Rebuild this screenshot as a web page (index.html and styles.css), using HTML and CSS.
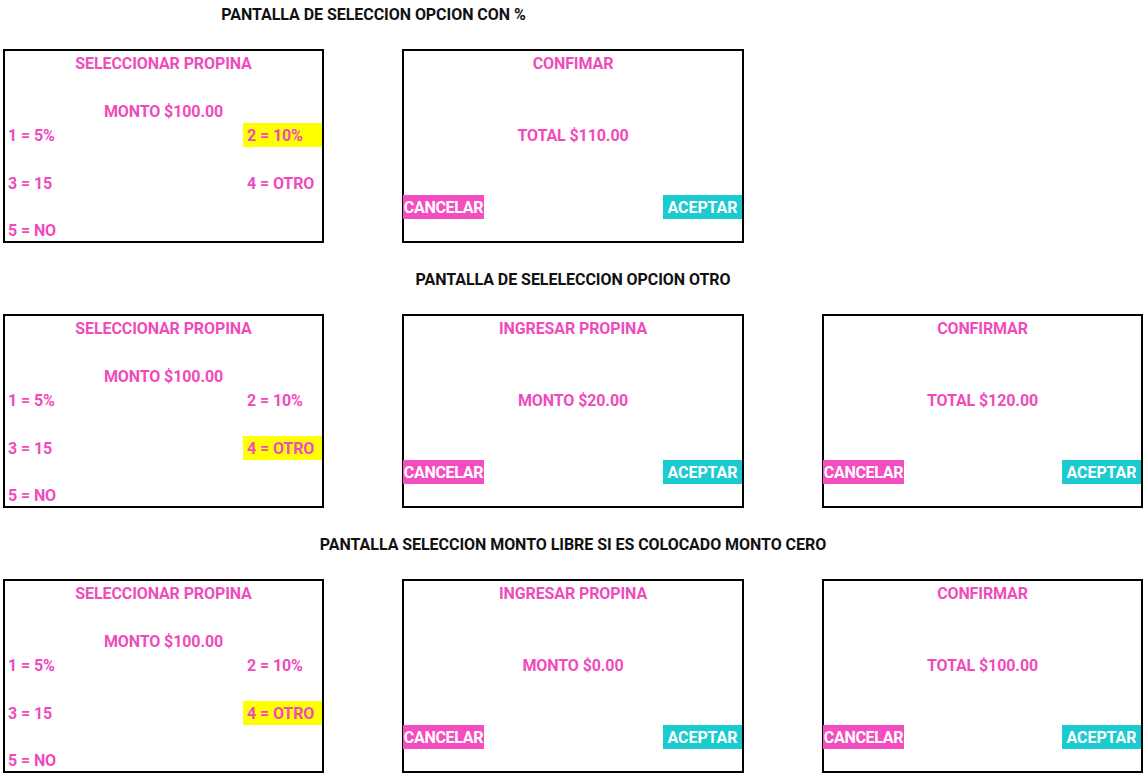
FILE: index.html
```html
<!DOCTYPE html>
<html lang="es">
<head>
<meta charset="utf-8">
<title>Pantallas de propina</title>
<link rel="stylesheet" href="styles.css">
</head>
<body>
<div class="page">
  <section class="row">
    <h2 class="title span2">PANTALLA DE SELECCION OPCION CON %</h2>
    <div class="box menu">
      <div class="cell head">SELECCIONAR PROPINA</div>
      <div class="cell amount">MONTO $100.00</div>
      <div class="cell o1">1 = 5%</div>
      <div class="cell o2 sel">2 = 10%</div>
      <div class="cell o3">3 = 15</div>
      <div class="cell o4">4 = OTRO</div>
      <div class="cell o5">5 = NO</div>
    </div>
    <div class="box screen">
      <div class="cell head">CONFIMAR</div>
      <div class="cell value">TOTAL $110.00</div>
      <div class="actions"><span class="btn cancel">CANCELAR</span><span class="btn ok">ACEPTAR</span></div>
    </div>
  </section>

  <section class="row">
    <h2 class="title span3">PANTALLA DE SELELECCION OPCION OTRO</h2>
    <div class="box menu">
      <div class="cell head">SELECCIONAR PROPINA</div>
      <div class="cell amount">MONTO $100.00</div>
      <div class="cell o1">1 = 5%</div>
      <div class="cell o2">2 = 10%</div>
      <div class="cell o3">3 = 15</div>
      <div class="cell o4 sel">4 = OTRO</div>
      <div class="cell o5">5 = NO</div>
    </div>
    <div class="box screen">
      <div class="cell head">INGRESAR PROPINA</div>
      <div class="cell value">MONTO $20.00</div>
      <div class="actions"><span class="btn cancel">CANCELAR</span><span class="btn ok">ACEPTAR</span></div>
    </div>
    <div class="box screen">
      <div class="cell head">CONFIRMAR</div>
      <div class="cell value">TOTAL $120.00</div>
      <div class="actions"><span class="btn cancel">CANCELAR</span><span class="btn ok">ACEPTAR</span></div>
    </div>
  </section>

  <section class="row">
    <h2 class="title span3">PANTALLA SELECCION MONTO LIBRE SI ES COLOCADO MONTO CERO</h2>
    <div class="box menu">
      <div class="cell head">SELECCIONAR PROPINA</div>
      <div class="cell amount">MONTO $100.00</div>
      <div class="cell o1">1 = 5%</div>
      <div class="cell o2">2 = 10%</div>
      <div class="cell o3">3 = 15</div>
      <div class="cell o4 sel">4 = OTRO</div>
      <div class="cell o5">5 = NO</div>
    </div>
    <div class="box screen">
      <div class="cell head">INGRESAR PROPINA</div>
      <div class="cell value">MONTO $0.00</div>
      <div class="actions"><span class="btn cancel">CANCELAR</span><span class="btn ok">ACEPTAR</span></div>
    </div>
    <div class="box screen">
      <div class="cell head">CONFIRMAR</div>
      <div class="cell value">TOTAL $100.00</div>
      <div class="actions"><span class="btn cancel">CANCELAR</span><span class="btn ok">ACEPTAR</span></div>
    </div>
  </section>
</div>
</body>
</html>
```
FILE: styles.css
```css
* { box-sizing: border-box; }
html, body { margin: 0; padding: 0; background: #ffffff; }
body {
  font-family: Roboto, "Liberation Sans", sans-serif;
  font-weight: 700;
  font-size: 16px;
  color: #ef4bbd;
}
.page {
  padding-top: 3px;
  padding-left: 3px;
  display: flex;
  flex-direction: column;
  gap: 25px;
}
.row {
  display: grid;
  grid-template-columns: 321px 342px 321px;
  grid-template-rows: 24px 194px;
  column-gap: 78px;
  row-gap: 22px;
}
.title {
  grid-row: 1;
  margin: 0;
  height: 24px;
  line-height: 24px;
  text-align: center;
  font-size: 16px;
  font-weight: 700;
  color: #111111;
  letter-spacing: -0.05px;
}
.span2 { grid-column: 1 / 3; }
.span3 { grid-column: 1 / 4; }

.box {
  grid-row: 2;
  height: 194px;
  border: 2px solid #000;
  display: grid;
  grid-template-rows: repeat(7, 24px) 1fr;
  letter-spacing: -0.1px;
}
.cell {
  display: flex;
  align-items: center;
  white-space: nowrap;
}
.head { grid-row: 1; grid-column: 1 / -1; justify-content: center; padding-top: 1px; }

.menu { grid-template-columns: 1fr 79px; }
.amount { grid-row: 3; grid-column: 1 / -1; justify-content: center; }
.o1 { grid-row: 4; grid-column: 1; padding-left: 3px; }
.o2 { grid-row: 4; grid-column: 2; padding-left: 4px; }
.o3 { grid-row: 6; grid-column: 1; padding-left: 3px; }
.o4 { grid-row: 6; grid-column: 2; padding-left: 4px; }
.o5 { grid-row: 8; grid-column: 1; padding-left: 3px; }
.sel { background: #ffff00; }

.screen { grid-template-columns: 1fr; }
.value { grid-row: 4; justify-content: center; }
.actions {
  grid-row: 7;
  display: flex;
  justify-content: space-between;
  margin-left: -1px;
}
.btn {
  display: flex;
  align-items: center;
  justify-content: center;
  height: 24px;
  color: #ffffff;
}
.cancel { width: 81px; background: #f44dbf; letter-spacing: -0.3px; }
.ok { width: 79px; background: #1ccbcf; }
```
